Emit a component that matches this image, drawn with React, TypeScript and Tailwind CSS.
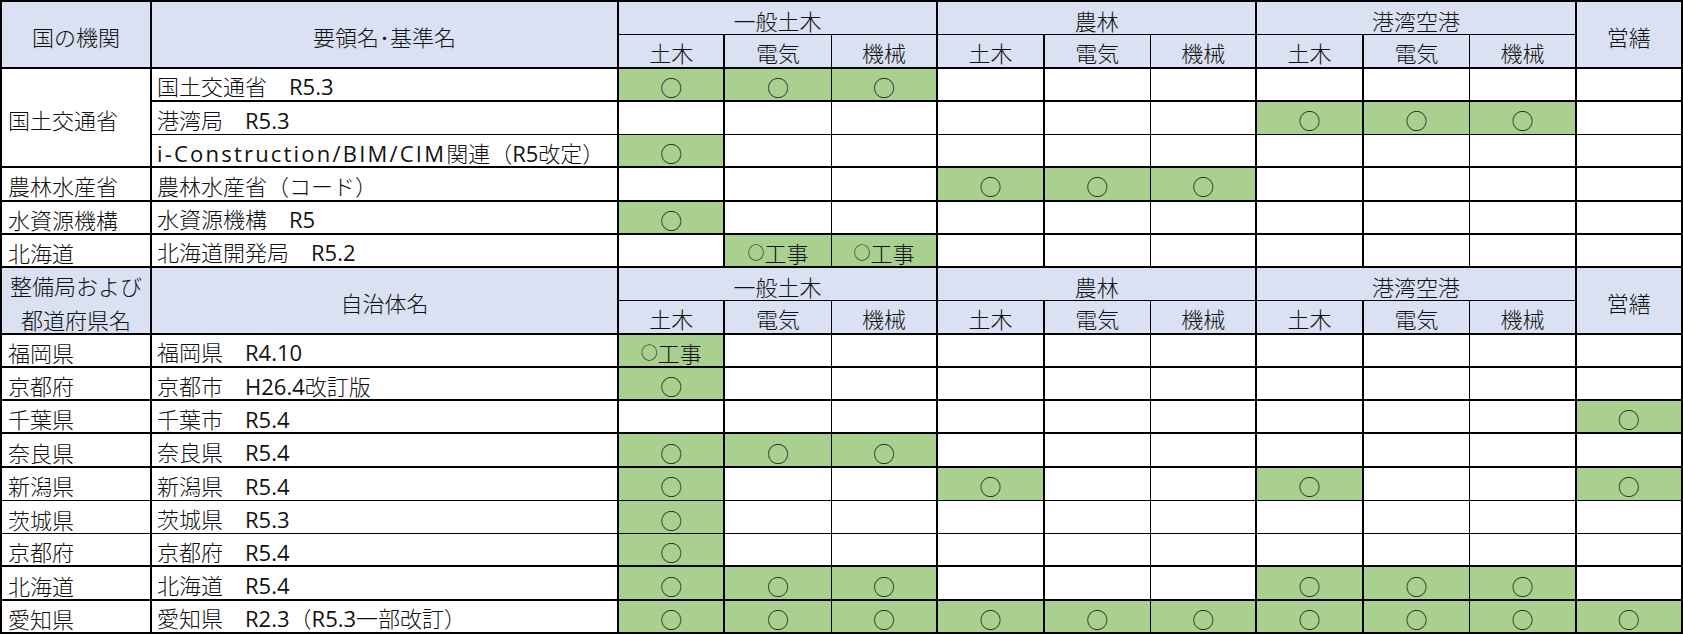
import React from "react";

type Mark = Record<number, string>;
type Row = { a?: string; aSpan?: number; b: string; m: Mark };

const all = (s: string, idx: number[]): Mark => {
  const o: Mark = {};
  idx.forEach((i) => (o[i] = s));
  return o;
};
const O = "○";

const top: Row[] = [
  { a: "国土交通省", aSpan: 3, b: "国土交通省　R5.3", m: all(O, [0, 1, 2]) },
  { b: "港湾局　R5.3", m: all(O, [6, 7, 8]) },
  { b: "i-Construction/BIM/CIM関連（R5改定）", m: all(O, [0]) },
  { a: "農林水産省", b: "農林水産省（コード）", m: all(O, [3, 4, 5]) },
  { a: "水資源機構", b: "水資源機構　R5", m: all(O, [0]) },
  { a: "北海道", b: "北海道開発局　R5.2", m: all("○工事", [1, 2]) },
];

const bottom: Row[] = [
  { a: "福岡県", b: "福岡県　R4.10", m: all("○工事", [0]) },
  { a: "京都府", b: "京都市　H26.4改訂版", m: all(O, [0]) },
  { a: "千葉県", b: "千葉市　R5.4", m: all(O, [9]) },
  { a: "奈良県", b: "奈良県　R5.4", m: all(O, [0, 1, 2]) },
  { a: "新潟県", b: "新潟県　R5.4", m: all(O, [0, 3, 6, 9]) },
  { a: "茨城県", b: "茨城県　R5.3", m: all(O, [0]) },
  { a: "京都府", b: "京都府　R5.4", m: all(O, [0]) },
  { a: "北海道", b: "北海道　R5.4", m: all(O, [0, 1, 2, 6, 7, 8]) },
  { a: "愛知県", b: "愛知県　R2.3（R5.3一部改訂）", m: all(O, [0, 1, 2, 3, 4, 5, 6, 7, 8, 9]) },
];

// bottom border widths per grid row index 0..18
const rowB = [1, 2, 2, 1, 2, 2, 2, 2, 1, 2, 2, 2, 2, 2, 1, 1, 2, 2, 2];
// right border widths per grid column 0..11
const colR = [2, 2, 2, 1, 2, 2, 1, 2, 2, 1, 2, 2];

const BR: Record<number, string> = { 1: "border-r", 2: "border-r-2" };
const BB: Record<number, string> = { 1: "border-b", 2: "border-b-2" };

const HEAD = "bg-[#D9E1F2]";
const GREEN = "bg-[#A9D08E]";
const CJK = { fontFamily: '"Noto Sans CJK JP", sans-serif' };
const LAT = { fontFamily: '"Open Sans", "Noto Sans", sans-serif' };

function Mixed({ text }: { text: string }) {
  const parts = text.split(/([A-Za-z0-9.\/\-]+)/);
  return (
    <span>
      {parts.map((p, i) =>
        i % 2 === 1 ? (
          <span key={i} style={LAT} className={p.length > 10 ? "font-normal tracking-[2.2px]" : "font-normal"}>
            {p}
          </span>
        ) : p ? (
          <span key={i}>{p}</span>
        ) : null
      )}
    </span>
  );
}

function Mk({ v }: { v: string }) {
  if (v === "○工事") {
    return (
      <span className="flex items-center">
        <span className="text-[17px]">○</span>
        <span>工事</span>
      </span>
    );
  }
  return <span>{v}</span>;
}

function Header({ startRow, c1, c2 }: { startRow: number; c1: React.ReactNode; c2: React.ReactNode }) {
  const bEnd = rowB[startRow + 1];
  return (
    <>
      <div className={`${HEAD} border-black ${BR[colR[0]]} ${BB[bEnd]} row-span-2 flex items-center justify-center text-center pt-[3px]`}>
        {c1}
      </div>
      <div className={`${HEAD} border-black ${BR[colR[1]]} ${BB[bEnd]} row-span-2 flex items-center justify-center pt-[3px]`}>
        {c2}
      </div>
      {["一般土木", "農林", "港湾空港"].map((g) => (
        <div key={g} className={`${HEAD} border-black border-r-2 ${BB[rowB[startRow]]} col-span-3 flex items-center justify-center pt-[3px]`}>
          {g}
        </div>
      ))}
      <div className={`${HEAD} border-black ${BR[colR[11]]} ${BB[bEnd]} row-span-2 flex items-center justify-center pt-[3px]`}>
        営繕
      </div>
      {[0, 1, 2].map((g) =>
        ["土木", "電気", "機械"].map((s, i) => (
          <div key={`${g}-${i}`} className={`${HEAD} border-black ${BR[colR[2 + g * 3 + i]]} ${BB[bEnd]} flex items-center justify-center pt-[3px]`}>
            {s}
          </div>
        ))
      )}
    </>
  );
}

function Rows({ rows, startRow }: { rows: Row[]; startRow: number }) {
  return (
    <>
      {rows.map((r, ri) => {
        const gr = startRow + ri;
        const span = r.aSpan ?? 1;
        return (
          <React.Fragment key={gr}>
            {r.a !== undefined &&
              (span === 3 ? (
                <div className={`row-span-3 border-black ${BR[colR[0]]} ${BB[rowB[gr + 2]]} flex items-center pl-[6px] pt-[3px] whitespace-nowrap`}>
                  {r.a}
                </div>
              ) : (
                <div className={`border-black ${BR[colR[0]]} ${BB[rowB[gr]]} flex items-center pl-[6px] pt-[3px] whitespace-nowrap`}>
                  {r.a}
                </div>
              ))}
            <div className={`border-black ${BR[colR[1]]} ${BB[rowB[gr]]} flex items-center pl-[5px] pt-[3px] whitespace-nowrap`}>
              <Mixed text={r.b} />
            </div>
            {Array.from({ length: 10 }).map((_, ci) => {
              const v = r.m[ci];
              return (
                <div
                  key={ci}
                  className={`${v ? GREEN : "bg-white"} border-black ${BR[colR[2 + ci]]} ${BB[rowB[gr]]} flex items-center justify-center pt-[3px]`}
                >
                  {v ? <Mk v={v} /> : null}
                </div>
              );
            })}
          </React.Fragment>
        );
      })}
    </>
  );
}

export default function App() {
  return (
    <div className="w-[1683px] h-[634px] bg-white overflow-hidden">
      <div
        className="grid w-[1683px] h-[634px] grid-cols-[150px_467px_repeat(10,minmax(0,1fr))] grid-rows-[repeat(19,minmax(0,1fr))] border-l-2 border-t-2 border-black text-[22px] leading-none text-[#111] font-light"
        style={CJK}
      >
        <Header startRow={0} c1={<span>国の機関</span>} c2={<span>要領名･基準名</span>} />
        <Rows rows={top} startRow={2} />
        <Header
          startRow={8}
          c1={
            <span className="leading-[34px]">
              整備局および
              <br />
              都道府県名
            </span>
          }
          c2="自治体名"
        />
        <Rows rows={bottom} startRow={10} />
      </div>
    </div>
  );
}
